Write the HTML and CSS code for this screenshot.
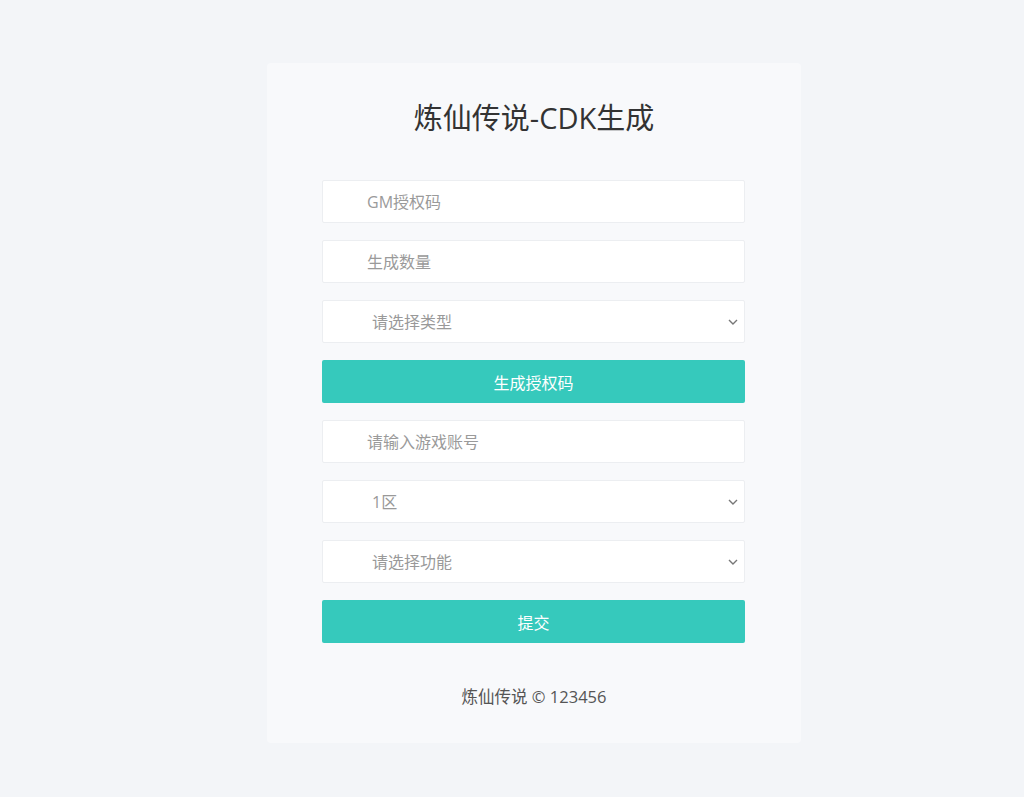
FILE: index.html
```html
<!DOCTYPE html>
<html lang="zh-CN">
<head>
<meta charset="utf-8">
<title>炼仙传说-CDK生成</title>
<link rel="stylesheet" href="styles.css">
</head>
<body>
<div class="card">
  <h1 class="title">炼仙传说-CDK生成</h1>
  <form class="form">
    <input class="field" type="text" placeholder="GM授权码">
    <input class="field" type="text" placeholder="生成数量">
    <div class="select-wrap">
      <select class="field select"><option>请选择类型</option></select>
      <svg class="chev" viewBox="0 0 10 6" width="10" height="6"><path d="M1 1l4 4 4-4" fill="none" stroke="#777" stroke-width="1.4"/></svg>
    </div>
    <button class="btn" type="button">生成授权码</button>
    <input class="field" type="text" placeholder="请输入游戏账号">
    <div class="select-wrap">
      <select class="field select"><option>1区</option></select>
      <svg class="chev" viewBox="0 0 10 6" width="10" height="6"><path d="M1 1l4 4 4-4" fill="none" stroke="#777" stroke-width="1.4"/></svg>
    </div>
    <div class="select-wrap">
      <select class="field select"><option>请选择功能</option></select>
      <svg class="chev" viewBox="0 0 10 6" width="10" height="6"><path d="M1 1l4 4 4-4" fill="none" stroke="#777" stroke-width="1.4"/></svg>
    </div>
    <button class="btn" type="button">提交</button>
  </form>
  <p class="footer">炼仙传说 © 123456</p>
</div>
</body>
</html>
```

FILE: styles.css
```css
* { box-sizing: border-box; }
html, body { margin: 0; padding: 0; }
body {
  background: #f3f5f8;
  font-family: "Open Sans", "Noto Sans CJK SC", sans-serif;
  height: 797px;
  overflow: hidden;
}
.card {
  width: 534px;
  margin: 63px 0 0 267px;
  background: #f8f9fb;
  border-radius: 4px;
  padding: 34px 0 34px;
}
.title {
  margin: 0;
  font-size: 29px;
  font-weight: 400;
  line-height: 42px;
  color: #333;
  text-align: center;
}
.form {
  width: 423px;
  margin: 41px 0 0 55px;
  display: flex;
  flex-direction: column;
  gap: 17px;
}
.field {
  display: block;
  width: 100%;
  height: 43px;
  border: 1px solid #eceef1;
  border-radius: 2px;
  background: #fff;
  font-family: "Open Sans", "Noto Sans CJK SC", sans-serif;
  font-size: 16px;
  color: #999;
  padding: 0 0 0 44px;
  outline: none;
}
.field::placeholder { color: #9a9a9a; }
.select-wrap { position: relative; }
.select {
  appearance: none;
  -webkit-appearance: none;
  padding-left: 49px;
}
.chev {
  position: absolute;
  right: 7px;
  top: 19px;
  pointer-events: none;
}
.btn {
  display: block;
  width: 100%;
  height: 43px;
  border: none;
  border-radius: 2px;
  background: #36c9bc;
  color: #fff;
  font-family: "Open Sans", "Noto Sans CJK SC", sans-serif;
  font-size: 16px;
}
.footer {
  margin: 42px 0 0;
  text-align: center;
  font-size: 16.5px;
  line-height: 24px;
  color: #555;
}
```
